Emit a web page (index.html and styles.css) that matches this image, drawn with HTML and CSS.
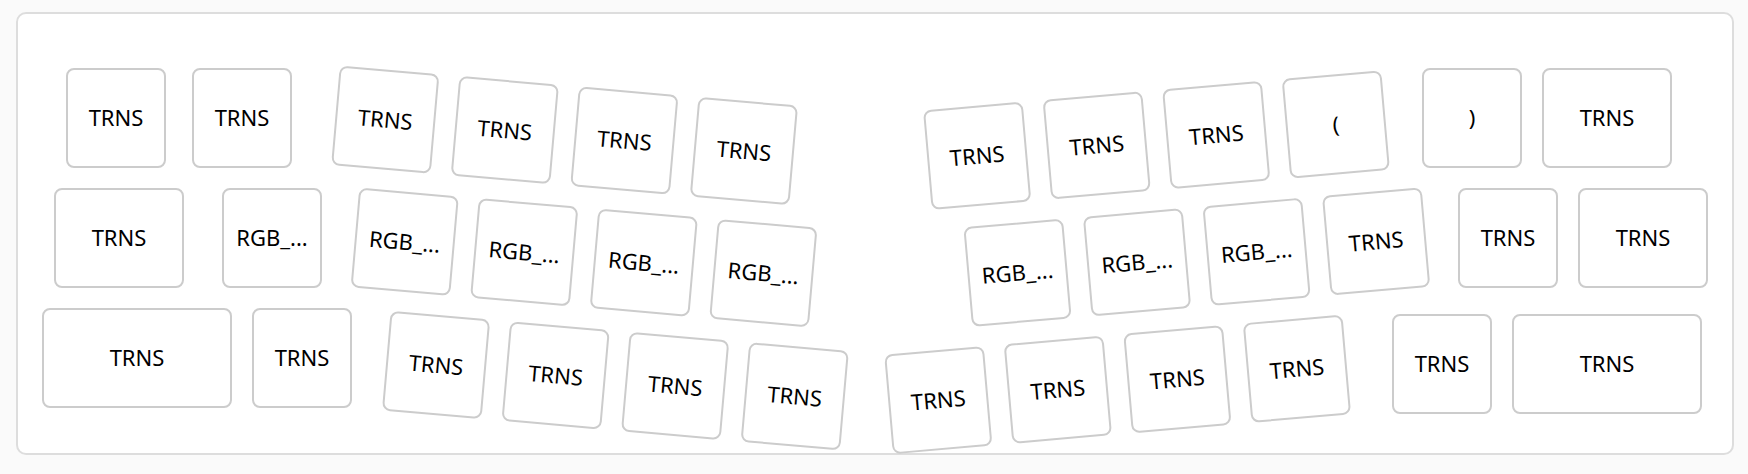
FILE: index.html
```html
<!DOCTYPE html>
<html lang="en">
<head>
<meta charset="utf-8">
<title>Keymap</title>
<link rel="stylesheet" href="styles.css">
</head>
<body>
<main class="board">
  <section class="half" aria-label="Left half">
    <div class="cluster">
      <div class="row row-number-left"><button class="key">TRNS</button><button class="key">TRNS</button></div>
      <div class="row row-home-left"><button class="key key-medium">TRNS</button><button class="key">RGB_...</button></div>
      <div class="row"><button class="key key-wide">TRNS</button><button class="key">TRNS</button></div>
    </div>
    <div class="cluster tilt-left">
      <div class="row"><button class="key">TRNS</button><button class="key">TRNS</button><button class="key">TRNS</button><button class="key">TRNS</button></div>
      <div class="row indent-30"><button class="key">RGB_...</button><button class="key">RGB_...</button><button class="key">RGB_...</button><button class="key">RGB_...</button></div>
      <div class="row indent-72"><button class="key">TRNS</button><button class="key">TRNS</button><button class="key">TRNS</button><button class="key">TRNS</button></div>
    </div>
  </section>
  <section class="half" aria-label="Right half">
    <div class="cluster tilt-right">
      <div class="row indent-60"><button class="key">TRNS</button><button class="key">TRNS</button><button class="key">TRNS</button><button class="key">(</button></div>
      <div class="row indent-90"><button class="key">RGB_...</button><button class="key">RGB_...</button><button class="key">RGB_...</button><button class="key">TRNS</button></div>
      <div class="row"><button class="key">TRNS</button><button class="key">TRNS</button><button class="key">TRNS</button><button class="key">TRNS</button></div>
    </div>
    <div class="cluster outer-right">
      <div class="row indent-30"><button class="key">)</button><button class="key key-medium">TRNS</button></div>
      <div class="row indent-66"><button class="key">TRNS</button><button class="key key-medium">TRNS</button></div>
      <div class="row row-lowered"><button class="key">TRNS</button><button class="key key-wide">TRNS</button></div>
    </div>
  </section>
</main>
</body>
</html>
```
FILE: styles.css
```css
* {
  box-sizing: border-box;
}

body {
  margin: 0;
  padding: 12px 14px 18px 16px;
  background: #fafafa;
  font-family: "Noto Sans", sans-serif;
}

.board {
  display: flex;
  justify-content: space-between;
  padding: 54px 24px 22px;
  border: 2px solid #ddd;
  border-radius: 10px;
  background: #fff;
}

.half {
  display: flex;
  align-items: flex-start;
}

.cluster {
  display: flex;
  flex-direction: column;
  gap: 20px;
}

.row {
  display: flex;
  gap: 20px;
}

.row-number-left {
  gap: 26px;
  padding-left: 24px;
}

.row-home-left {
  gap: 38px;
  padding-left: 12px;
}

.row-lowered {
  padding-top: 6px;
}

.indent-30 { padding-left: 30px; }
.indent-60 { padding-left: 60px; }
.indent-66 { padding-left: 66px; }
.indent-72 { padding-left: 72px; }
.indent-90 { padding-left: 90px; }

/* The inner clusters splay outwards by five degrees. */
.tilt-left {
  margin: 20px 0 0 -28px;
  transform: rotate(5deg);
}

.tilt-right {
  margin-top: 23px;
  transform: rotate(-5deg);
}

.outer-right {
  margin-left: -35px;
}

.key {
  flex: none;
  width: 100px;
  height: 100px;
  padding: 0 0 2px;
  border: 2px solid #ccc;
  border-radius: 8px;
  background: #fff;
  color: #000;
  font: inherit;
  font-size: 22px;
  line-height: 30px;
  cursor: pointer;
}

.key-medium { width: 130px; }
.key-wide { width: 190px; }
```
